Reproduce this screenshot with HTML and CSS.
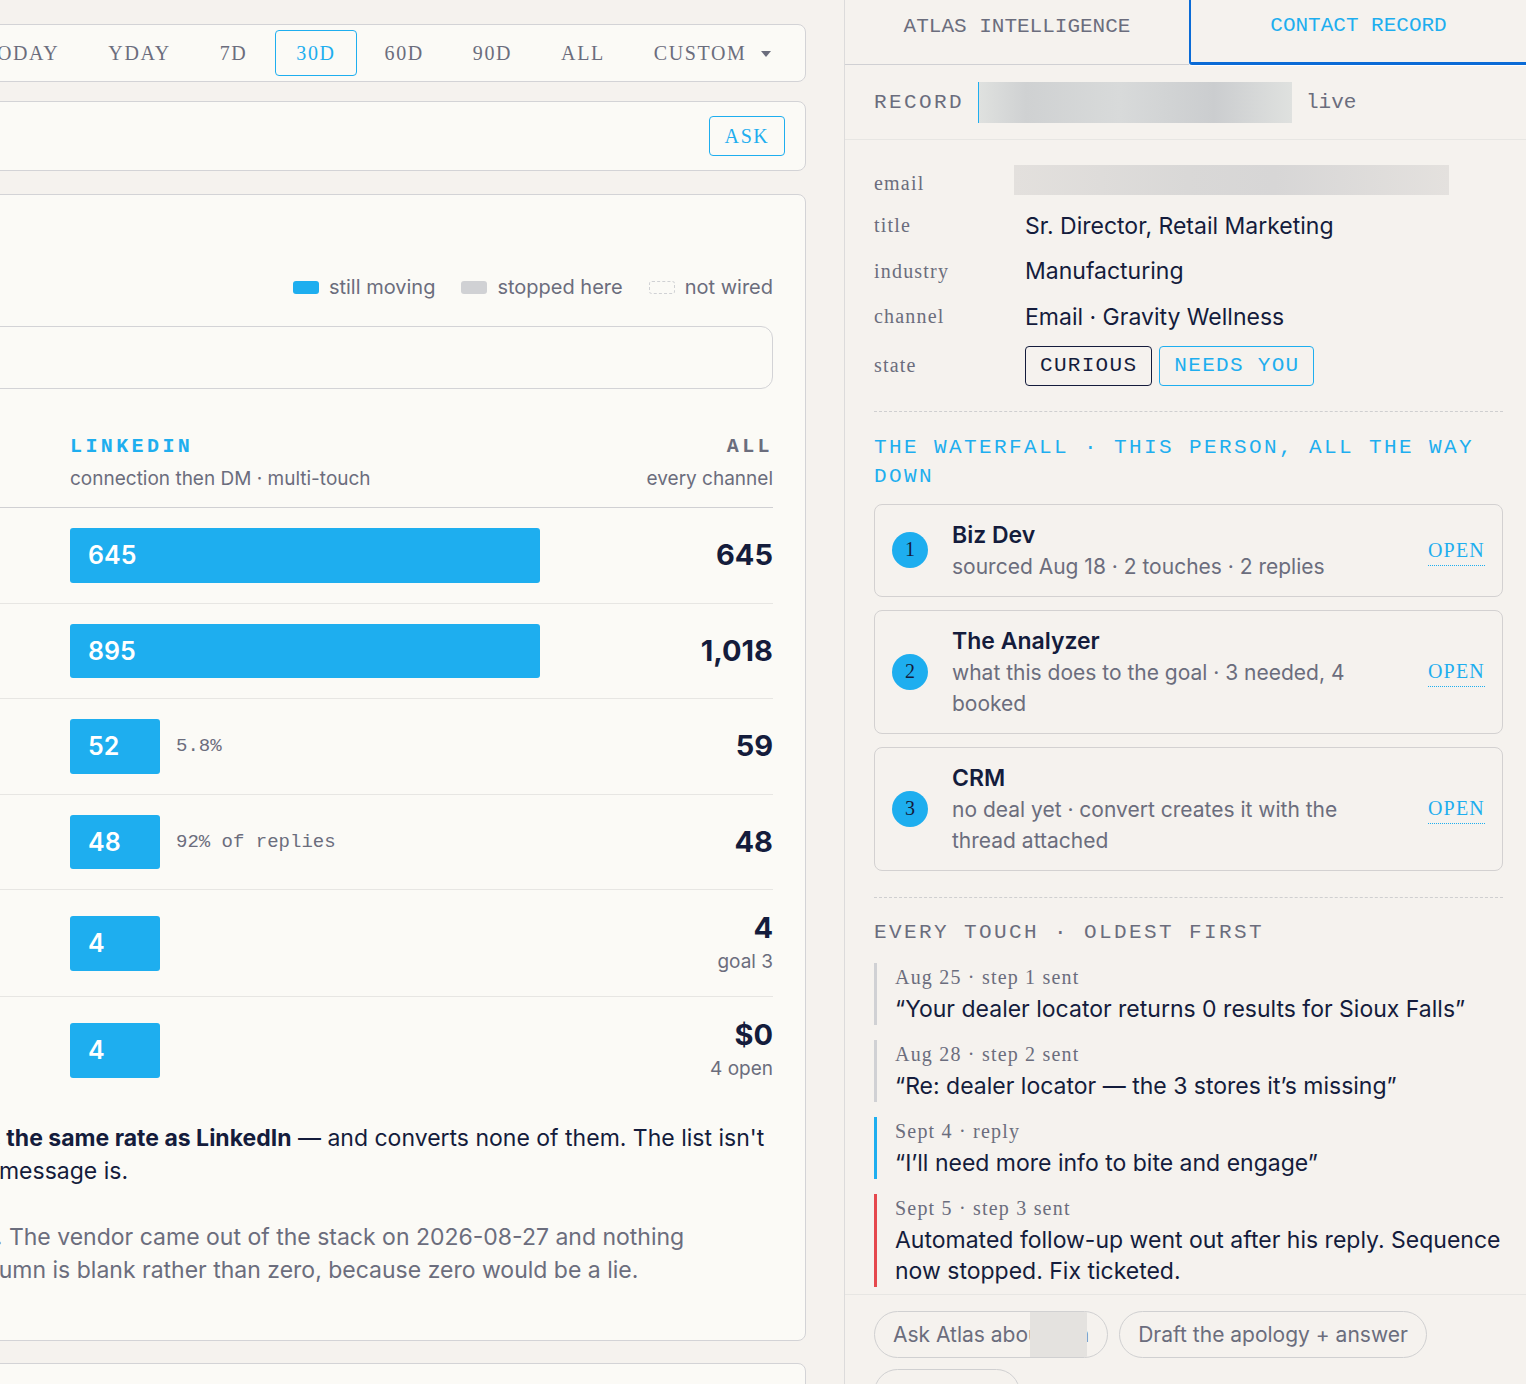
FILE: index.html
```html
<!DOCTYPE html>
<html lang="en">
<head>
  <meta charset="UTF-8" />
  <title>Atlas - Funnel</title>
  <link rel="stylesheet" href="styles.css">
</head>
<body>
  <div class="app">
    <main class="main-pane">
      <div class="card range-bar">
        <button class="range">TODAY</button>
        <button class="range">YDAY</button>
        <button class="range">7D</button>
        <button class="range active">30D</button>
        <button class="range">60D</button>
        <button class="range">90D</button>
        <button class="range">ALL</button>
        <button class="range">CUSTOM <span class="caret"></span></button>
      </div>

      <div class="card ask-bar">
        <button class="ask-button">ASK</button>
      </div>

      <section class="card funnel-card">
        <div class="legend">
          <span class="legend-item"><i class="swatch moving"></i>still moving</span>
          <span class="legend-item"><i class="swatch stopped"></i>stopped here</span>
          <span class="legend-item"><i class="swatch unwired"></i>not wired</span>
        </div>
        <div class="summary-box"></div>

        <div class="funnel-head">
          <div>
            <div class="col-title blue">LINKEDIN</div>
            <div class="col-sub">connection then DM · multi-touch</div>
          </div>
          <div class="head-all">
            <div class="col-title">ALL</div>
            <div class="col-sub">every channel</div>
          </div>
        </div>

        <div class="funnel-row">
          <div class="bar-cell"><div class="bar wide">645</div></div>
          <div class="total"><div class="total-num">645</div></div>
        </div>
        <div class="funnel-row">
          <div class="bar-cell"><div class="bar wide">895</div></div>
          <div class="total"><div class="total-num">1,018</div></div>
        </div>
        <div class="funnel-row">
          <div class="bar-cell"><div class="bar">52</div><span class="bar-note">5.8%</span></div>
          <div class="total"><div class="total-num">59</div></div>
        </div>
        <div class="funnel-row">
          <div class="bar-cell"><div class="bar">48</div><span class="bar-note">92% of replies</span></div>
          <div class="total"><div class="total-num">48</div></div>
        </div>
        <div class="funnel-row">
          <div class="bar-cell"><div class="bar">4</div></div>
          <div class="total"><div class="total-num">4</div><div class="total-sub">goal 3</div></div>
        </div>
        <div class="funnel-row last">
          <div class="bar-cell"><div class="bar">4</div></div>
          <div class="total"><div class="total-num">$0</div><div class="total-sub">4 open</div></div>
        </div>

        <p class="note first-note"><strong>Email replies at 5.7%, the same rate as LinkedIn</strong> — and converts none of them. The list isn't the problem, the next message is.</p>
        <p class="note muted-note"><strong>Instantly is not wired.</strong> The vendor came out of the stack on 2026-08-27 and nothing replaced it, so this column is blank rather than zero, because zero would be a lie.</p>
      </section>

      <div class="card next-card"></div>
    </main>

    <!-- Right side panel -->
    <aside class="side-pane">
      <div class="tabs">
        <button class="tab">ATLAS INTELLIGENCE</button>
        <button class="tab active">CONTACT RECORD</button>
      </div>

      <div class="record-bar">
        <span class="record-label">RECORD</span>
        <div class="record-select"></div>
        <span class="record-live">live</span>
      </div>

      <div class="side-body">
        <div class="fields">
          <div class="field"><span class="field-label">email</span><div class="redacted-email"></div></div>
          <div class="field"><span class="field-label">title</span><span class="field-value">Sr. Director, Retail Marketing</span></div>
          <div class="field"><span class="field-label">industry</span><span class="field-value">Manufacturing</span></div>
          <div class="field"><span class="field-label">channel</span><span class="field-value">Email · Gravity Wellness</span></div>
          <div class="field state-field">
            <span class="field-label">state</span>
            <div class="pills">
              <span class="pill">CURIOUS</span>
              <span class="pill blue-pill">NEEDS YOU</span>
            </div>
          </div>
        </div>

        <div class="section waterfall">
          <h3 class="section-title blue">THE WATERFALL · THIS PERSON, ALL THE WAY DOWN</h3>
          <div class="step">
            <span class="step-num">1</span>
            <div class="step-text">
              <div class="step-name">Biz Dev</div>
              <div class="step-sub">sourced Aug 18 · 2 touches · 2 replies</div>
            </div>
            <a class="step-open">OPEN</a>
          </div>
          <div class="step">
            <span class="step-num">2</span>
            <div class="step-text">
              <div class="step-name">The Analyzer</div>
              <div class="step-sub">what this does to the goal · 3 needed, 4 booked</div>
            </div>
            <a class="step-open">OPEN</a>
          </div>
          <div class="step">
            <span class="step-num">3</span>
            <div class="step-text">
              <div class="step-name">CRM</div>
              <div class="step-sub">no deal yet · convert creates it with the thread attached</div>
            </div>
            <a class="step-open">OPEN</a>
          </div>
        </div>

        <div class="section touches">
          <h3 class="section-title">EVERY TOUCH · OLDEST FIRST</h3>
          <div class="touch">
            <div class="touch-date">Aug 25 · step 1 sent</div>
            <div class="touch-text">“Your dealer locator returns 0 results for Sioux Falls”</div>
          </div>
          <div class="touch">
            <div class="touch-date">Aug 28 · step 2 sent</div>
            <div class="touch-text">“Re: dealer locator — the 3 stores it’s missing”</div>
          </div>
          <div class="touch reply">
            <div class="touch-date">Sept 4 · reply</div>
            <div class="touch-text">“I’ll need more info to bite and engage”</div>
          </div>
          <div class="touch bad">
            <div class="touch-date">Sept 5 · step 3 sent</div>
            <div class="touch-text">Automated follow-up went out after his reply. Sequence now stopped. Fix ticketed.</div>
          </div>
        </div>
      </div>

      <div class="chips">
        <button class="chip first-chip">Ask Atlas about him<span class="chip-mask"></span></button>
        <button class="chip">Draft the apology + answer</button>
        <button class="chip last-chip">Convert</button>
      </div>
    </aside>
  </div>
</body>
</html>
```

FILE: styles.css
```css
/* Reset some default styles */
* {
  margin: 0;
  padding: 0;
  box-sizing: border-box;
}

html, body {
  height: 100%;
  overflow: hidden;
}

body {
  background-color: #f5f2ee;
  color: #141c3c;
  font-family: Inter, "Liberation Sans", sans-serif;
}

button {
  background: none;
  border: none;
  color: inherit;
  font: inherit;
}

.blue {
  color: #1eaeef;
}

.app {
  display: flex;
  height: 1384px;
  overflow: hidden;
}

/* Left pane */
.main-pane {
  width: 845px;
  flex-shrink: 0;
  padding: 24px 38px 0 0;
  border-right: 1px solid #dcdbdb;
  overflow: hidden;
}

.card {
  background-color: #fbfaf6;
  border: 1px solid #d3d3d6;
  border-radius: 8px;
  margin-left: -40px;
}

/* Date range bar */
.range-bar {
  display: flex;
  justify-content: flex-end;
  align-items: center;
  height: 58px;
  padding-right: 13px;
  gap: 7px;
  margin-bottom: 19px;
}

.range {
  height: 46px;
  padding: 0 20px;
  border: 1px solid transparent;
  border-radius: 4px;
  color: #6b6d7d;
  font-family: "Liberation Serif", serif;
  font-size: 20px;
  letter-spacing: 1.6px;
  white-space: nowrap;
}

.range.active {
  color: #1eaeef;
  border-color: #1eaeef;
}

.caret {
  display: inline-block;
  width: 0;
  height: 0;
  margin-left: 8px;
  vertical-align: 3px;
  border-left: 5px solid transparent;
  border-right: 5px solid transparent;
  border-top: 6px solid #6b6d7d;
}

/* Ask bar */
.ask-bar {
  display: flex;
  justify-content: flex-end;
  align-items: center;
  height: 70px;
  padding-right: 20px;
  margin-bottom: 23px;
}

.ask-button {
  width: 76px;
  height: 40px;
  border: 1px solid #1eaeef;
  border-radius: 4px;
  color: #1eaeef;
  font-family: "Liberation Serif", serif;
  font-size: 20px;
  letter-spacing: 1.6px;
}

/* Funnel card */
.funnel-card {
  height: 1147px;
  padding: 77px 32px 0 0;
  margin-bottom: 22px;
}

.legend {
  display: flex;
  justify-content: flex-end;
  gap: 26px;
  height: 30px;
  align-items: center;
  margin-bottom: 24px;
  font-size: 20px;
  color: #6b6d7d;
}

.legend-item {
  display: flex;
  align-items: center;
  gap: 10px;
}

.swatch {
  width: 26px;
  height: 13px;
  border-radius: 3px;
}

.swatch.moving {
  background-color: #1eaeef;
}

.swatch.stopped {
  background-color: #d0d1d4;
}

.swatch.unwired {
  border: 1px dashed #d0d1d4;
}

.summary-box {
  height: 63px;
  margin-left: -40px;
  border: 1px solid #d3d3d6;
  border-radius: 12px;
}

.funnel-head {
  display: flex;
  justify-content: space-between;
  height: 119px;
  padding: 44px 0 0 109px;
  border-bottom: 1px solid #d0d0d3;
}

.col-title {
  color: #6b6d7d;
  font-family: "Liberation Mono", monospace;
  font-size: 20px;
  font-weight: bold;
  letter-spacing: 3.4px;
  line-height: 28px;
}

.col-title.blue {
  color: #1eaeef;
}

.col-sub {
  margin-top: 4px;
  color: #6b6d7d;
  font-size: 19px;
  line-height: 28px;
}

.head-all {
  text-align: right;
}

.funnel-row {
  display: flex;
  justify-content: space-between;
  align-items: center;
  padding: 20px 0 20px 109px;
  border-bottom: 1px solid #e7e6e3;
}

.funnel-row.last {
  border-bottom: none;
}

.bar-cell {
  display: flex;
  align-items: center;
  gap: 16px;
}

.bar {
  width: 90px;
  height: 54.6px;
  padding-left: 18px;
  background-color: #1eaeef;
  border-radius: 3px;
  color: #ffffff;
  font-size: 25px;
  font-weight: 600;
  line-height: 54.6px;
}

.bar.wide {
  width: 470px;
}

.bar-note {
  color: #6b6d7d;
  font-family: "Liberation Mono", monospace;
  font-size: 19px;
}

.total {
  text-align: right;
}

.total-num {
  font-size: 29px;
  font-weight: 700;
  line-height: 36px;
}

.total-sub {
  margin-top: 2px;
  color: #6b6d7d;
  font-size: 19px;
  line-height: 28px;
}

/* Notes under the funnel */
.note {
  margin-left: 0;
  font-size: 23px;
  line-height: 33px;
}

.first-note {
  margin-top: 19px;
  margin-left: -200px;
}

.first-note strong {
  font-weight: 700;
}

.muted-note {
  margin-top: 33px;
  margin-left: -200px;
  color: #6b6d7d;
}

.next-card {
  height: 60px;
}

/* Right pane */
.side-pane {
  flex: 1;
  min-width: 0;
  display: flex;
  flex-direction: column;
  overflow: hidden;
}

.tabs {
  display: flex;
  flex-shrink: 0;
  height: 65px;
  font-family: "Liberation Mono", monospace;
  font-size: 21px;
  letter-spacing: 1.4px;
}

.tab {
  width: 344px;
  padding-bottom: 12px;
  color: #6b6d7d;
  border-bottom: 1px solid #d0d0d3;
}

.tab.active {
  flex: 1;
  color: #1eaeef;
  border-left: 2px solid #0b6bd6;
  border-bottom: 3px solid #0b6bd6;
  border-bottom-left-radius: 3px;
  box-shadow: 0 1px 0 #ffffff;
}

.record-bar {
  display: flex;
  flex-shrink: 0;
  align-items: center;
  height: 75px;
  padding-left: 29px;
  border-bottom: 1px solid #e7e6e3;
  color: #6b6d7d;
  font-family: "Liberation Mono", monospace;
  font-size: 21px;
}

.record-label {
  letter-spacing: 2.4px;
}

.record-select {
  width: 314px;
  height: 41px;
  margin: 0 14px 0 14px;
  border-left: 1px solid #1eaeef;
  background: linear-gradient(90deg, #dfe1df 0%, #cfd1d2 15%, #d8dada 45%, #cbcdcf 75%, #dfe1df 100%);
}

.side-body {
  flex-shrink: 0;
  padding: 25px 23px 8px 29px;
  height: 1154px;
  overflow: hidden;
}

/* Contact fields */
.fields {
  display: flex;
  flex-direction: column;
  padding-bottom: 25px;
}

.field {
  display: flex;
  align-items: center;
  height: 45.5px;
}

.field:first-child {
  height: 30px;
  margin-bottom: 8px;
  align-items: flex-end;
}

.state-field {
  height: 40px;
  margin-top: 6px;
}

.field-label {
  width: 151px;
  color: #6b6d7d;
  font-family: "Liberation Serif", serif;
  font-size: 20px;
  letter-spacing: 1.2px;
}

.field-value {
  font-size: 23px;
}

.redacted-email {
  width: 435px;
  height: 30px;
  margin-left: -11px;
  background: linear-gradient(90deg, #e3e0dd 0%, #d9d8d7 40%, #d7d6d6 60%, #e4e1de 100%);
}

.pills {
  display: flex;
  gap: 7px;
}

.pill {
  height: 40px;
  padding: 0 14px;
  border: 1px solid #141c3c;
  border-radius: 4px;
  font-family: "Liberation Mono", monospace;
  font-size: 21px;
  letter-spacing: 1.3px;
  line-height: 38px;
}

.blue-pill {
  color: #1eaeef;
  border-color: #1eaeef;
}

/* Sections in the side panel */
.section {
  border-top: 1px dashed #cfcfd0;
}

.section-title {
  color: #6b6d7d;
  font-family: "Liberation Mono", monospace;
  font-size: 21px;
  font-weight: normal;
  letter-spacing: 2.4px;
  line-height: 29px;
}

.section-title.blue {
  color: #1eaeef;
}

.waterfall {
  padding-top: 21px;
  padding-bottom: 26px;
}

.waterfall .section-title {
  margin-bottom: 13px;
}

.step {
  display: flex;
  align-items: center;
  padding: 14px 17px;
  margin-bottom: 13px;
  border: 1px solid #d3d1d1;
  border-radius: 8px;
}

.step:last-child {
  margin-bottom: 0;
}

.step-num {
  flex-shrink: 0;
  width: 36px;
  height: 36px;
  margin-right: 24px;
  background-color: #1eaeef;
  border-radius: 50%;
  font-family: "Liberation Serif", serif;
  font-size: 20px;
  line-height: 34px;
  text-align: center;
}

.step-text {
  flex: 1;
}

.step-name {
  font-size: 23px;
  font-weight: 600;
  line-height: 32px;
}

.step-sub {
  color: #6b6d7d;
  font-size: 21px;
  line-height: 31px;
}

.step-open {
  flex-shrink: 0;
  margin-left: 24px;
  color: #1eaeef;
  border-bottom: 1px dotted #1eaeef;
  font-family: "Liberation Serif", serif;
  font-size: 20px;
  letter-spacing: 1.2px;
  line-height: 30px;
}

.touches {
  padding-top: 20px;
}

.touches .section-title {
  margin-bottom: 16px;
}

.touch {
  padding: 0 0 0 18px;
  margin-bottom: 15px;
  border-left: 3px solid #d0d1d4;
}

.touch.reply {
  border-left-color: #1eaeef;
}

.touch.bad {
  border-left-color: #e5484d;
  margin-bottom: 0;
}

.touch-date {
  color: #6b6d7d;
  font-family: "Liberation Serif", serif;
  font-size: 20px;
  letter-spacing: 1.2px;
  line-height: 28px;
}

.touch-text {
  font-size: 23px;
  line-height: 31px;
  margin-top: 3px;
}

/* Suggested questions */
.chips {
  display: flex;
  flex-shrink: 0;
  flex-wrap: wrap;
  gap: 11px;
  padding: 16px 23px 16px 29px;
  border-top: 1px solid #e7e6e3;
}

.chip {
  position: relative;
  height: 47px;
  padding: 0 18px;
  border: 1px solid #d0d0d1;
  border-radius: 24px;
  color: #6b6d7d;
  font-size: 21px;
  overflow: hidden;
  white-space: nowrap;
}

.chip-mask {
  position: absolute;
  top: 0;
  bottom: 0;
  left: 155px;
  width: 57px;
  background-color: #e4e2df;
}

.last-chip {
  width: 146px;
}
```
